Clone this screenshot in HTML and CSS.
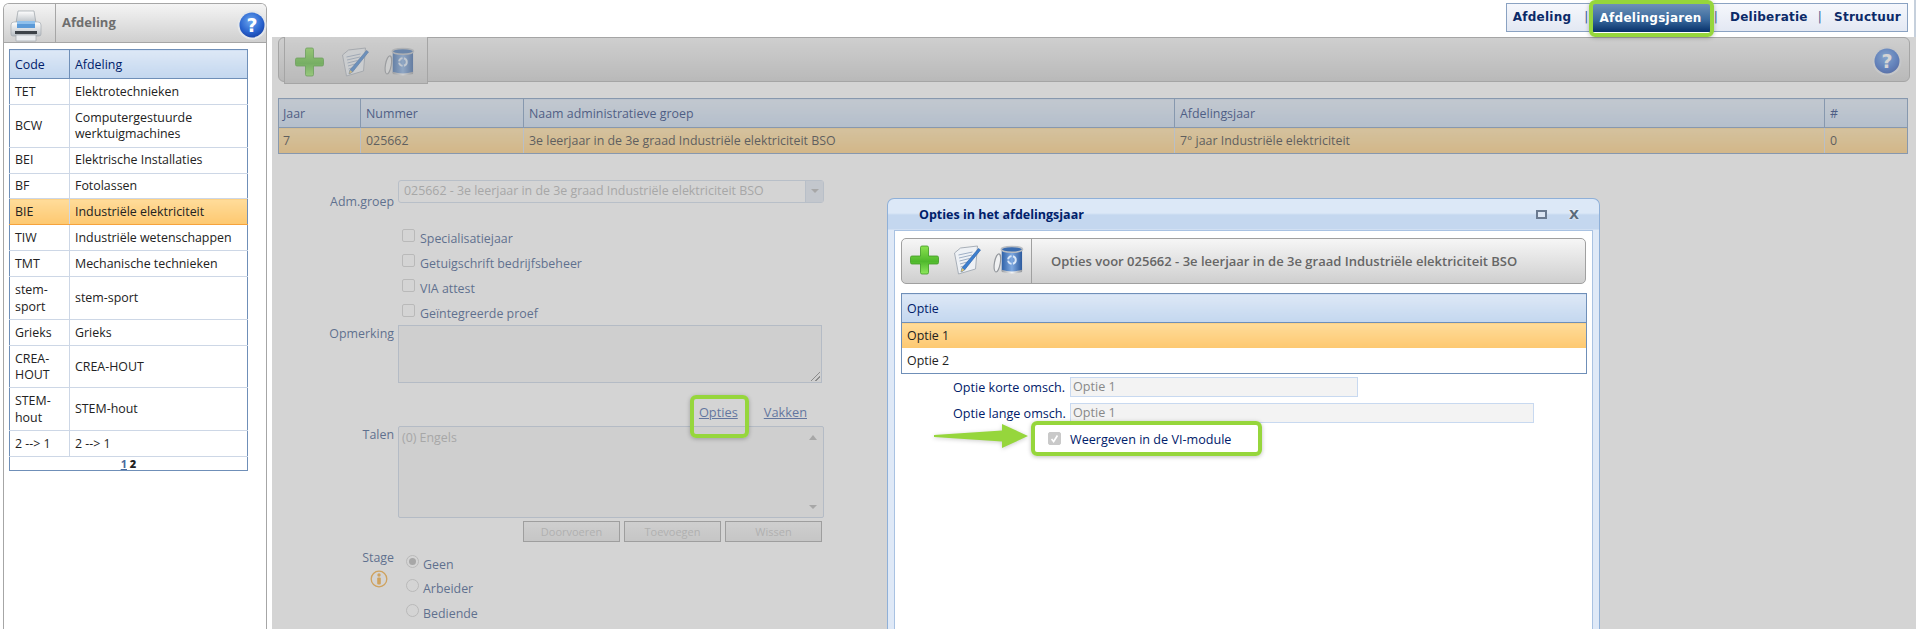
FILE: index.html
```html
<!DOCTYPE html>
<html lang="nl">
<head>
    <meta charset="UTF-8">
    <title>Afdelingsjaren</title>
    <link rel="stylesheet" href="styles.css">
</head>
<body>
    <svg class="defs" aria-hidden="true">
        <defs>
            <linearGradient id="gPlus" x1="0" y1="0" x2="0" y2="1">
                <stop offset="0" stop-color="#8be24f"/>
                <stop offset="0.55" stop-color="#4fb82c"/>
                <stop offset="1" stop-color="#8ee85c"/>
            </linearGradient>
            <linearGradient id="gBin" x1="0" y1="0" x2="1" y2="0">
                <stop offset="0" stop-color="#2f62a8"/>
                <stop offset="0.5" stop-color="#7fa9e0"/>
                <stop offset="1" stop-color="#2c5a9e"/>
            </linearGradient>
            <linearGradient id="gRim" x1="0" y1="0" x2="1" y2="0">
                <stop offset="0" stop-color="#9a9ea3"/>
                <stop offset="0.5" stop-color="#f4f5f6"/>
                <stop offset="1" stop-color="#94989d"/>
            </linearGradient>
            <radialGradient id="gHelp" cx="0.45" cy="0.35" r="0.75">
                <stop offset="0" stop-color="#6aa6ef"/>
                <stop offset="0.6" stop-color="#2a64cf"/>
                <stop offset="1" stop-color="#12389c"/>
            </radialGradient>
            <linearGradient id="gPrint" x1="0" y1="0" x2="0" y2="1">
                <stop offset="0" stop-color="#ffffff"/>
                <stop offset="1" stop-color="#b8bec4"/>
            </linearGradient>
            <symbol id="icoPlus" viewBox="0 0 30 30">
                <path d="M11 2.500q0-1.500 1.500-1.500h5q1.500 0 1.500 1.500V11h8.500q1.500 0 1.500 1.500v5q0 1.500-1.500 1.500H19v8.500q0 1.500-1.500 1.500h-5q-1.500 0-1.500-1.500V19H2.500Q1 19 1 17.500v-5Q1 11 2.500 11H11z" fill="url(#gPlus)" stroke="#3f9a22" stroke-width="0.8"/>
            </symbol>
            <symbol id="icoNote" viewBox="0 0 30 30">
                <path d="M9 3 L26 1 L24 24 L7 29 L3 8z" fill="#eef1f5" stroke="#a8afb8"/>
                <path d="M7 10l14-3M7.500 13l13-3M8 16l10-2.500M8.500 19l7-2M9 22l5-1.500" stroke="#94a7bf" stroke-width="0.9" fill="none"/>
                <path d="M27 3.500l2 1.500L13 25l-3.500 2 1-4z" fill="#3c7fd0" stroke="#25599e" stroke-width="0.6"/>
                <path d="M10.500 23l-1 4 3.500-2z" fill="#e8c66a"/>
            </symbol>
            <symbol id="icoBin" viewBox="0 0 32 30">
                <path d="M9 4h21v22q-10.500 3.500-21 0z" fill="url(#gBin)"/>
                <ellipse cx="19.500" cy="4" rx="11" ry="3" fill="#3a6cb0" stroke="#b9bdc2" stroke-width="1.600"/>
                <path d="M9 25q10.500 3.500 21 0v2.500q-10.500 3-21 0z" fill="url(#gRim)"/>
                <ellipse cx="4.500" cy="18" rx="3" ry="9.500" transform="rotate(10 4.500 18)" fill="#f0f1f2" stroke="#94989d" stroke-width="1.200"/>
                <circle cx="19.500" cy="15" r="4" fill="none" stroke="#dbe8f8" stroke-width="2" stroke-dasharray="5 1.500"/>
            </symbol>
            <symbol id="icoPrint" viewBox="0 0 34 32">
                <path d="M9 1h16l2 12H7z" fill="url(#gPrint)" stroke="#9aa0a6" stroke-width="0.7"/>
                <path d="M2 15q0-3 3-3h24q3 0 3 3v9q0 2-2 2H4q-2 0-2-2z" fill="url(#gPrint)" stroke="#a4aab0" stroke-width="0.7"/>
                <path d="M8 11h18v7H8z" fill="#5b9ad8"/>
                <path d="M8 11h18v3H8z" fill="#8fc0ec"/>
                <path d="M6 21h22v3H6z" fill="#3c4248"/>
                <path d="M7 25h20v6H7z" fill="#e9ecef" stroke="#a4aab0" stroke-width="0.7"/>
            </symbol>
            <symbol id="icoHelp" viewBox="0 0 30 30">
                <circle cx="15" cy="15" r="14.500" fill="#e4e7ea"/>
                <circle cx="15" cy="15" r="12.500" fill="url(#gHelp)"/>
                <text x="15" y="21.500" text-anchor="middle" class="help-mark">?</text>
            </symbol>
        </defs>
    </svg>

    <div class="page">
        <aside class="sidebar">
            <div class="side-head">
                <div class="side-print"><svg class="ico-print"><use href="#icoPrint"/></svg></div>
                <div class="side-title">Afdeling</div>
                <svg class="ico-help-side"><use href="#icoHelp"/></svg>
            </div>
            <table class="grid side-grid">
                <thead>
                    <tr><th class="col-code">Code</th><th>Afdeling</th></tr>
                </thead>
                <tbody>
                    <tr><td>TET</td><td>Elektrotechnieken</td></tr>
                    <tr><td>BCW</td><td>Computergestuurde werktuigmachines</td></tr>
                    <tr><td>BEI</td><td>Elektrische Installaties</td></tr>
                    <tr><td>BF</td><td>Fotolassen</td></tr>
                    <tr class="sel"><td>BIE</td><td>Industriële elektriciteit</td></tr>
                    <tr><td>TIW</td><td>Industriële wetenschappen</td></tr>
                    <tr><td>TMT</td><td>Mechanische technieken</td></tr>
                    <tr><td>stem-sport</td><td>stem-sport</td></tr>
                    <tr><td>Grieks</td><td>Grieks</td></tr>
                    <tr><td>CREA-HOUT</td><td>CREA-HOUT</td></tr>
                    <tr><td>STEM-hout</td><td>STEM-hout</td></tr>
                    <tr><td>2 --&gt; 1</td><td>2 --&gt; 1</td></tr>
                    <tr><td colspan="2" class="pager"><a href="#">1</a> <b>2</b></td></tr>
                </tbody>
            </table>
        </aside>

        <main class="main">
            <div class="nav-row">
                <nav class="nav">
                    <a class="nav-item" href="#">Afdeling</a>
                    <span class="nav-sep sep-first">|</span>
                    <a class="nav-item active" href="#">Afdelingsjaren<span class="hl hl-nav"></span></a>
                    <span class="nav-sep">|</span>
                    <a class="nav-item" href="#">Deliberatie</a>
                    <span class="nav-sep sep-last">|</span>
                    <a class="nav-item" href="#">Structuur</a>
                </nav>
            </div>

            <div class="content">
                <div class="toolbar">
                    <div class="tool-cell">
                        <svg class="ico"><use href="#icoPlus"/></svg>
                        <svg class="ico"><use href="#icoNote"/></svg>
                        <svg class="ico"><use href="#icoBin"/></svg>
                    </div>
                    <svg class="ico-help-bar"><use href="#icoHelp"/></svg>
                </div>

                <table class="grid year-grid">
                    <thead>
                        <tr>
                            <th class="c-jaar">Jaar</th>
                            <th class="c-num">Nummer</th>
                            <th class="c-naam">Naam administratieve groep</th>
                            <th class="c-jr">Afdelingsjaar</th>
                            <th>#</th>
                        </tr>
                    </thead>
                    <tbody>
                        <tr class="sel">
                            <td>7</td>
                            <td>025662</td>
                            <td>3e leerjaar in de 3e graad Industriële elektriciteit BSO</td>
                            <td>7° jaar Industriële elektriciteit</td>
                            <td>0</td>
                        </tr>
                    </tbody>
                </table>

                <form class="form">
                    <label class="lbl lbl-adm">Adm.groep</label>
                    <div class="select">
                        <span>025662 - 3e leerjaar in de 3e graad Industriële elektriciteit BSO</span>
                        <span class="select-btn"><i class="tri-down"></i></span>
                    </div>

                    <div class="spacer"></div>
                    <div class="checks">
                        <div class="check"><i class="box"></i>Specialisatiejaar</div>
                        <div class="check"><i class="box"></i>Getuigschrift bedrijfsbeheer</div>
                        <div class="check"><i class="box"></i>VIA attest</div>
                        <div class="check"><i class="box"></i>Geïntegreerde proef</div>
                    </div>

                    <label class="lbl">Opmerking</label>
                    <div class="area"><i class="grip"></i></div>

                    <div class="spacer"></div>
                    <div class="links">
                        <a href="#" class="link-opties">Opties<span class="hl hl-opties"></span></a>
                        <a href="#">Vakken</a>
                    </div>

                    <label class="lbl">Talen</label>
                    <div class="listbox">
                        <span>(0) Engels</span>
                        <i class="tri-up"></i>
                        <i class="tri-down tri-low"></i>
                    </div>

                    <div class="spacer"></div>
                    <div class="btns">
                        <button type="button" class="btn">Doorvoeren</button>
                        <button type="button" class="btn">Toevoegen</button>
                        <button type="button" class="btn">Wissen</button>
                    </div>

                    <div class="stage-lbl">
                        <div class="lbl">Stage</div>
                        <svg class="ico-info" viewBox="0 0 18 18">
                            <circle cx="9" cy="9" r="7.800" fill="#fff" stroke="#f5a020" stroke-width="1.300"/>
                            <circle cx="9" cy="5" r="1.700" fill="#f5a020"/>
                            <rect x="7.200" y="7.500" width="3.600" height="7" rx="1" fill="#f5a020"/>
                        </svg>
                    </div>
                    <div class="radios">
                        <div class="radio"><i class="dot on"></i>Geen</div>
                        <div class="radio"><i class="dot"></i>Arbeider</div>
                        <div class="radio"><i class="dot"></i>Bediende</div>
                    </div>
                </form>

                <div class="overlay"></div>

                <section class="dialog">
                    <header class="dlg-head">
                        <span class="dlg-title">Opties in het afdelingsjaar</span>
                        <span class="dlg-max"></span>
                        <span class="dlg-close">X</span>
                    </header>
                    <div class="dlg-body">
                        <div class="dlg-bar">
                            <div class="dlg-tools">
                                <svg class="ico"><use href="#icoPlus"/></svg>
                                <svg class="ico"><use href="#icoNote"/></svg>
                                <svg class="ico"><use href="#icoBin"/></svg>
                            </div>
                            <div class="dlg-bar-text">Opties voor 025662 - 3e leerjaar in de 3e graad Industriële elektriciteit BSO</div>
                        </div>

                        <table class="grid opt-grid">
                            <thead><tr><th>Optie</th></tr></thead>
                            <tbody>
                                <tr class="sel"><td>Optie 1</td></tr>
                                <tr><td>Optie 2</td></tr>
                            </tbody>
                        </table>

                        <div class="fields">
                            <label>Optie korte omsch.</label>
                            <div class="input short">Optie 1</div>
                            <label>Optie lange omsch.</label>
                            <div class="input long">Optie 1</div>
                            <div class="vi-box"><i class="box checked"><svg viewBox="0 0 13 13"><path d="M3 7l2.500 3L10 3" fill="none" stroke="#fff" stroke-width="2"/></svg></i></div>
                            <div class="vi-text">Weergeven in de VI-module<span class="hl hl-vi"></span></div>
                        </div>

                        <svg class="arrow" viewBox="0 0 94 26">
                            <path d="M0 11 L68 6.500 L68 0 L94 12 L68 24 L68 17.500 L0 13 Z" fill="#96d63c"/>
                        </svg>
                    </div>
                </section>
            </div>
        </main>
    </div>
</body>
</html>
```

FILE: styles.css
```css
* {
    box-sizing: border-box;
}
html, body {
    margin: 0;
    height: 629px;
    overflow: hidden;
    background: white;
    font-family: "Open Sans", "Noto Sans", sans-serif;
    font-size: 12.400px;
    line-height: 17px;
    color: #222;
}
.defs {
    position: absolute;
    width: 0;
    height: 0;
}
.help-mark {
    font-family: "DejaVu Sans", sans-serif;
    font-size: 19px;
    font-weight: bold;
    fill: white;
}
.page {
    display: flex;
    height: 629px;
}

/* left panel */
.sidebar {
    width: 264px;
    height: 626px;
    margin: 3px 0 0 3px;
    border: 1px solid #a6a6a6;
    border-bottom: 0;
    border-radius: 6px 6px 0 0;
    flex-shrink: 0;
}
.side-head {
    display: flex;
    align-items: stretch;
    height: 39px;
    border-bottom: 1px solid #a6a6a6;
    background: linear-gradient(#f4f4f4, #cfcfcf);
    border-radius: 5px 5px 0 0;
}
.side-print {
    width: 52px;
    border-right: 1px solid #a6a6a6;
    padding: 6px 0 0 5px;
}
.ico-print {
    width: 34px;
    height: 32px;
}
.side-title {
    flex: 1;
    padding: 10px 0 0 6px;
    font-weight: bold;
    font-size: 13px;
    color: #6e6e6e;
}
.ico-help-side {
    width: 30px;
    height: 30px;
    margin: 6px -1px 0 0;
}
.grid {
    border-collapse: collapse;
    table-layout: fixed;
}
.grid th {
    height: 29px;
    padding: 0 5px;
    font-weight: normal;
    text-align: left;
    color: #00206a;
    background: linear-gradient(#dde8f6, #c3d7ef);
    border: 1px solid #6f8fb8;
}
.grid td {
    padding: 4.700px 5px 3.700px;
    line-height: 16.600px;
    border: 1px solid #cdd7e6;
}
.grid td:first-child {
    border-left-color: #6f8fb8;
}
.grid td:last-child {
    border-right-color: #6f8fb8;
}
.grid tbody tr:last-child td {
    border-bottom-color: #6f8fb8;
}
.grid .sel td {
    background: linear-gradient(#ffdc9a, #fdc870);
    border-top-color: #fdc870;
    border-bottom-color: #f6a33c;
}
.side-grid {
    width: 239px;
    margin: 6px 0 0 5px;
    border: 1px solid #6f8fb8;
}
.side-grid td:first-child {
    width: 60px;
}
.col-code {
    width: 60px;
}
.side-grid .pager {
    height: 14px;
    padding: 0;
    text-align: center;
    font-size: 11px;
    line-height: 12px;
    font-weight: bold;
}
.pager a {
    color: #4a6a9c;
}

/* main */
.main {
    flex: 1;
    margin-left: 5px;
    display: flex;
    flex-direction: column;
    min-width: 0;
}
.nav-row {
    height: 37px;
    display: flex;
    justify-content: flex-end;
    padding: 3px 6px 0 0;
    border-right: 2px solid #c6d0dc;
}
.nav {
    display: flex;
    align-items: center;
    height: 29px;
    padding: 0 6px;
    border: 1px solid #8aa2c2;
    background: linear-gradient(#f5f7fc, #e3e8f3);
    font-family: "DejaVu Sans", sans-serif;
    font-weight: bold;
    font-size: 12px;
    letter-spacing: 0.250px;
}
.nav-item {
    color: #0b2a68;
    text-decoration: none;
}
.nav-sep {
    color: #3a5a96;
    font-weight: normal;
    margin: 0 12px;
}
.sep-first {
    margin-left: 13px;
}
.sep-last {
    margin-left: 10px;
}
.nav-item.active {
    position: relative;
    align-self: stretch;
    margin: 0 -9px -1px -8px;
    padding: 6px 9px 0 7px;
    color: white;
    background: linear-gradient(#6e92b8, #3a6a9e 55%, #06306a);
}
.hl {
    position: absolute;
    z-index: 2;
    border: 4px solid #96d63c;
    border-radius: 6px;
    box-shadow: 0 1px 4px rgba(0,0,0,0.25);
    pointer-events: none;
}
.hl-nav {
    top: -4px;
    left: -4px;
    right: -3px;
    bottom: -5px;
}
.content {
    position: relative;
    flex: 1;
    padding: 0 6px;
    min-height: 0;
}
.overlay {
    position: absolute;
    inset: 0;
    z-index: 1;
    background: rgba(163,163,163,0.47);
}
.toolbar {
    display: flex;
    justify-content: space-between;
    height: 45px;
    border: 1px solid #a6a6a6;
    border-radius: 6px;
    background: linear-gradient(#f5f5f5, #cccccc);
}
.tool-cell {
    display: flex;
    gap: 14px;
    width: 144px;
    height: 47px;
    margin: -1px 0 0 5px;
    padding: 10px 0 0 9px;
    border: 1px solid #a6a6a6;
    border-top: 0;
    background: linear-gradient(#f5f5f5, #cccccc);
}
.ico {
    width: 31px;
    height: 30px;
    flex-shrink: 0;
}
.ico-help-bar {
    width: 30px;
    height: 30px;
    margin: 8px 7px 0 0;
}
.year-grid {
    width: 1630px;
    margin-top: 16px;
    border: 1px solid #6f8fb8;
}
.year-grid th:first-child,
.year-grid td:first-child {
    padding-left: 4px;
}
.c-jaar {
    width: 82px;
}
.c-num {
    width: 163px;
}
.c-naam {
    width: 651px;
}
.c-jr {
    width: 650px;
}

/* form */
.form {
    display: grid;
    grid-template-columns: 116px 426px;
    column-gap: 4px;
    margin-top: 26px;
    color: #23437c;
}
.lbl {
    text-align: right;
    color: #23437c;
}
.lbl-adm {
    align-self: end;
    margin-bottom: -7px;
}
.select {
    display: flex;
    justify-content: space-between;
    height: 23px;
    padding-left: 5px;
    line-height: 20px;
    border: 1px solid #cbd7e8;
    border-radius: 3px;
    color: #aaa;
    background: white;
}
.select-btn {
    width: 18px;
    background: #dfe7f2;
    border-left: 1px solid #cbd7e8;
    display: flex;
    align-items: center;
    justify-content: center;
}
.tri-down {
    width: 0;
    height: 0;
    border: 4px solid transparent;
    border-top: 4px solid #aaa;
    border-bottom: 0;
}
.tri-up {
    position: absolute;
    right: 6px;
    top: 8px;
    border: 4px solid transparent;
    border-bottom: 5px solid #aaa;
    border-top: 0;
}
.tri-low {
    position: absolute;
    right: 6px;
    bottom: 8px;
}
.checks {
    margin-top: 26px;
    height: 96px;
    overflow: hidden;
}
.check {
    display: flex;
    gap: 5px;
    height: 25px;
    padding: 1px 0 0 4px;
}
.check .box {
    margin-top: -1px;
}
.box {
    display: block;
    width: 13px;
    height: 13px;
    border: 1px solid #ccc;
    border-radius: 2px;
    background: white;
    flex-shrink: 0;
}
.box.checked {
    border-color: #c9c9c9;
    background: #c9c9c9;
}
.box.checked svg {
    display: block;
    width: 11px;
    height: 11px;
}
.area {
    position: relative;
    width: 424px;
    height: 58px;
    border: 1px solid #c3d0e3;
    background: #f5f5f5;
}
.grip {
    position: absolute;
    right: 1px;
    bottom: 1px;
    width: 9px;
    height: 9px;
    background: linear-gradient(135deg, transparent 45%, #777 45%, #777 55%, transparent 55%, transparent 70%, #777 70%, #777 80%, transparent 80%);
}
.links {
    display: flex;
    justify-content: flex-end;
    gap: 26px;
    height: 43px;
    padding: 21px 17px 0 0;
    font-size: 12.800px;
}
.links a {
    color: #2a4f9c;
}
.link-opties {
    position: relative;
}
.hl-opties {
    top: -9px;
    left: -9px;
    right: -11px;
    bottom: -12px;
}
.listbox {
    position: relative;
    height: 92px;
    padding: 2px 3px;
    border: 1px solid #c3d0e3;
    border-radius: 2px;
    color: #aaa;
    background: #f5f5f5;
}
.btns {
    display: flex;
    justify-content: flex-end;
    gap: 4px;
    margin-top: 3px;
    padding-right: 2px;
}
.btn {
    width: 97px;
    height: 21px;
    padding: 0;
    font: inherit;
    font-size: 11px;
    color: #bbb;
    background: linear-gradient(#f5f5f5, #e4e4e4);
    border: 1px solid #999;
}
.stage-lbl {
    margin-top: 7px;
    text-align: right;
}
.ico-info {
    display: block;
    width: 18px;
    height: 18px;
    margin: 4px 6px 0 auto;
}
.radios {
    margin-top: 12px;
}
.radio {
    display: flex;
    gap: 4px;
    height: 24.500px;
    padding: 2px 0 0 8px;
}
.dot {
    position: relative;
    display: block;
    width: 13px;
    height: 13px;
    margin-top: -1px;
    border: 1px solid #ccc;
    border-radius: 50%;
    background: white;
}
.dot.on::after {
    content: "";
    position: absolute;
    inset: 2px;
    border-radius: 50%;
    background: #aaa;
}

/* dialog */
.dialog {
    position: absolute;
    z-index: 3;
    left: 615px;
    top: 161px;
    width: 713px;
    height: 431px;
    padding: 0 6px;
    border: 1px solid #8fb0d8;
    border-bottom: 0;
    border-radius: 7px 7px 0 0;
    background: linear-gradient(#dce8f7, #dce8f7 14px, #c4d7ef 16px, #c4d7ef 30px, #dfe9f7 31px);
}
.dlg-head {
    display: flex;
    align-items: center;
    height: 31px;
    padding-left: 25px;
}
.dlg-title {
    flex: 1;
    font-size: 12.500px;
    font-weight: bold;
    color: #00206a;
}
.dlg-max {
    width: 11px;
    height: 9px;
    margin-right: 22px;
    border: 2px solid #6a7a90;
    background: #dce6f4;
}
.dlg-close {
    margin-right: 14px;
    font-family: "DejaVu Sans", sans-serif;
    font-size: 13px;
    font-weight: bold;
    color: #5a6a7a;
    text-shadow: 0 0 2px white;
}
.dlg-body {
    position: relative;
    height: 400px;
    padding: 7px 6px 0;
    background: white;
    border: 1px solid #a9c2e2;
    border-bottom: 0;
}
.dlg-bar {
    display: flex;
    align-items: stretch;
    height: 46px;
    border: 1px solid #a0a0a0;
    border-radius: 5px;
    background: linear-gradient(#f6f6f6, #cfcfcf);
}
.dlg-tools {
    display: flex;
    gap: 11px;
    width: 130px;
    padding: 6px 0 0 7px;
    border-right: 1px solid #a0a0a0;
}
.dlg-bar-text {
    padding: 14px 0 0 19px;
    font-size: 13px;
    font-weight: 600;
    color: #666;
}
.opt-grid {
    width: 686px;
    margin-top: 9px;
    border: 1px solid #6f8fb8;
}
.opt-grid td {
    border-top: 0;
    border-bottom: 0;
}
.fields {
    display: grid;
    grid-template-columns: 117px 1fr;
    row-gap: 6px;
    margin: 3px 0 0 52px;
    font-size: 12.600px;
    color: #00206a;
}
.fields label {
    align-self: center;
    margin-top: 2px;
}
.input {
    height: 20px;
    padding-left: 2px;
    line-height: 18px;
    border: 1px solid #c8d9f0;
    background: #f3f3f3;
    color: #888;
}
.short {
    width: 288px;
}
.long {
    width: 464px;
}
.vi-box {
    display: flex;
    justify-content: flex-end;
    padding: 3px 9px 0 0;
}
.vi-text {
    position: relative;
    width: 164px;
    margin-top: 2px;
}
.hl-vi {
    top: -10px;
    left: -39px;
    right: -28px;
    bottom: -8px;
}
.arrow {
    position: absolute;
    left: 39px;
    top: 193px;
    width: 94px;
    height: 26px;
    filter: drop-shadow(0 1px 2px rgba(0,0,0,0.2));
}
```
